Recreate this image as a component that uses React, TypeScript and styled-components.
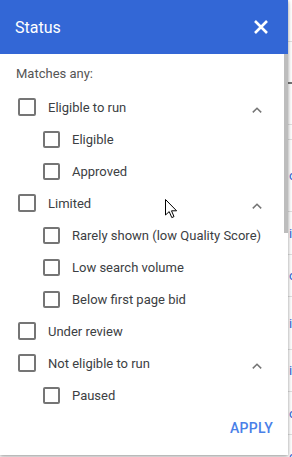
import React, { ReactElement } from 'react';
import styled, { createGlobalStyle } from 'styled-components';

interface StatusItem {
  label: string;
  level: number;
  expandable?: boolean;
}

const items: StatusItem[] = [
  { label: 'Eligible to run', level: 0, expandable: true },
  { label: 'Eligible', level: 1 },
  { label: 'Approved', level: 1 },
  { label: 'Limited', level: 0, expandable: true },
  { label: 'Rarely shown (low Quality Score)', level: 1 },
  { label: 'Low search volume', level: 1 },
  { label: 'Below first page bid', level: 1 },
  { label: 'Under review', level: 0 },
  { label: 'Not eligible to run', level: 0, expandable: true },
  { label: 'Paused', level: 1 },
];

const tableRows = [
  { h: 42, dark: false, link: '' },
  { h: 42, dark: true, link: '' },
  { h: 41, dark: false, link: '' },
  { h: 15, dark: false, link: '' },
  { h: 72, dark: false, link: 'o' },
  { h: 43, dark: false, link: 'i' },
  { h: 42, dark: false, link: 'o' },
  { h: 53, dark: false, link: 'i' },
  { h: 42, dark: false, link: 'i' },
  { h: 43, dark: false, link: 'o' },
  { h: 43, dark: false, link: 'o' },
];

const GlobalStyle = createGlobalStyle`
  html, body {
    margin: 0;
    padding: 0;
    background: #fff;
  }
  body {
    font-family: Roboto, 'Liberation Sans', Arial, sans-serif;
  }
`;

const Screen = styled.div`
  position: relative;
  width: 292px;
  height: 457px;
  overflow: hidden;
  background: #fff;
`;

const Table = styled.div`
  display: flex;
  flex-direction: column;
`;

const TableRow = styled.div<{ $h: number; $dark: boolean }>`
  height: ${({ $h }) => $h}px;
  box-sizing: border-box;
  border-bottom: ${({ $dark }) => ($dark ? '2px solid #757575' : '1px solid #e0e0e0')};
  display: flex;
  align-items: center;
  padding-left: 289px;
  color: #3367d6;
  font-size: 13px;
`;

const Panel = styled.div`
  position: absolute;
  left: 0;
  top: 0;
  width: 288px;
  height: 455px;
  background: #fff;
  display: flex;
  flex-direction: column;
  box-shadow: 0 1px 3px rgba(0, 0, 0, 0.3), 0 2px 6px rgba(0, 0, 0, 0.15);
`;

const Header = styled.header`
  height: 54px;
  flex: none;
  background: #3367d6;
  display: flex;
  align-items: center;
  justify-content: space-between;
  padding: 0 19px 0 15px;
  color: #fff;
`;

const Title = styled.h2`
  margin: 0;
  font-size: 16px;
  font-weight: 400;
`;

const CloseButton = styled.button`
  border: 0;
  background: none;
  padding: 0;
  width: 16px;
  height: 16px;
  display: flex;
  cursor: pointer;
`;

const ScrollArea = styled.div`
  flex: 1;
  display: flex;
  min-height: 0;
`;

const List = styled.div`
  flex: 1;
  padding-top: 10px;
  overflow: hidden;
`;

const Caption = styled.div`
  font-size: 13px;
  line-height: 20px;
  color: #555;
  padding-left: 16px;
  margin-bottom: 7px;
`;

const Row = styled.label<{ $level: number }>`
  height: 32px;
  display: flex;
  align-items: center;
  padding-left: ${({ $level }) => ($level ? 43 : 18)}px;
  padding-right: 22px;
  font-size: 13px;
  color: #3c4043;
  cursor: pointer;
`;

const Box = styled.span<{ $level: number }>`
  width: ${({ $level }) => ($level ? 17 : 18)}px;
  height: ${({ $level }) => ($level ? 17 : 18)}px;
  box-sizing: border-box;
  border: 2px solid #757575;
  border-radius: 2px;
  flex: none;
  margin-right: ${({ $level }) => ($level ? 12 : 12)}px;
`;

const Label = styled.span`
  flex: 1;
  white-space: nowrap;
`;

const Chevron = styled.svg`
  width: 10px;
  height: 6px;
  margin-top: 5px;
  flex: none;
`;

const Track = styled.div`
  width: 4px;
  flex: none;
  display: flex;
  flex-direction: column;
`;

const Thumb = styled.div`
  height: 179px;
  background: #bdbdbd;
`;

const Footer = styled.footer`
  height: 44px;
  flex: none;
  display: flex;
  justify-content: flex-end;
  align-items: flex-start;
  padding: 7px 15px 0 0;
  box-sizing: border-box;
`;

const ApplyButton = styled.button`
  border: 0;
  background: none;
  padding: 0;
  font-family: inherit;
  font-size: 14px;
  font-weight: 500;
  line-height: 20px;
  letter-spacing: 0.3px;
  color: #4a80e8;
  cursor: pointer;
`;

const Cursor = styled.svg`
  position: absolute;
  left: 165px;
  top: 199px;
  width: 13px;
  height: 20px;
`;

const App = (): ReactElement => (
  <Screen>
    <GlobalStyle />
    <Table>
      {tableRows.map((r, i) => (
        <TableRow key={i} $h={r.h} $dark={r.dark}>
          {r.link}
        </TableRow>
      ))}
    </Table>
    <Panel>
      <Header>
        <Title>Status</Title>
        <CloseButton aria-label="Close">
          <svg width="16" height="16" viewBox="0 0 16 16">
            <path d="M2 2L14 14M14 2L2 14" stroke="#fff" strokeWidth="2.6" />
          </svg>
        </CloseButton>
      </Header>
      <ScrollArea>
        <List>
          <Caption>Matches any:</Caption>
          {items.map((item) => (
            <Row key={item.label} $level={item.level}>
              <Box $level={item.level} />
              <Label>{item.label}</Label>
              {item.expandable && (
                <Chevron viewBox="0 0 10 6">
                  <polyline points="0.8,5.4 5,1.2 9.2,5.4" fill="none" stroke="#757575" strokeWidth="1.5" />
                </Chevron>
              )}
            </Row>
          ))}
        </List>
        <Track>
          <Thumb />
        </Track>
      </ScrollArea>
      <Footer>
        <ApplyButton>APPLY</ApplyButton>
      </Footer>
    </Panel>
    <Cursor viewBox="0 0 13 20">
      <path d="M0.5 0.5 L0.5 16 L4.2 12.6 L6.8 18.6 L9 17.6 L6.5 11.8 L11.6 11.8 Z" fill="#fff" stroke="#000" strokeWidth="1" strokeLinejoin="round" />
    </Cursor>
  </Screen>
);

export default App;
